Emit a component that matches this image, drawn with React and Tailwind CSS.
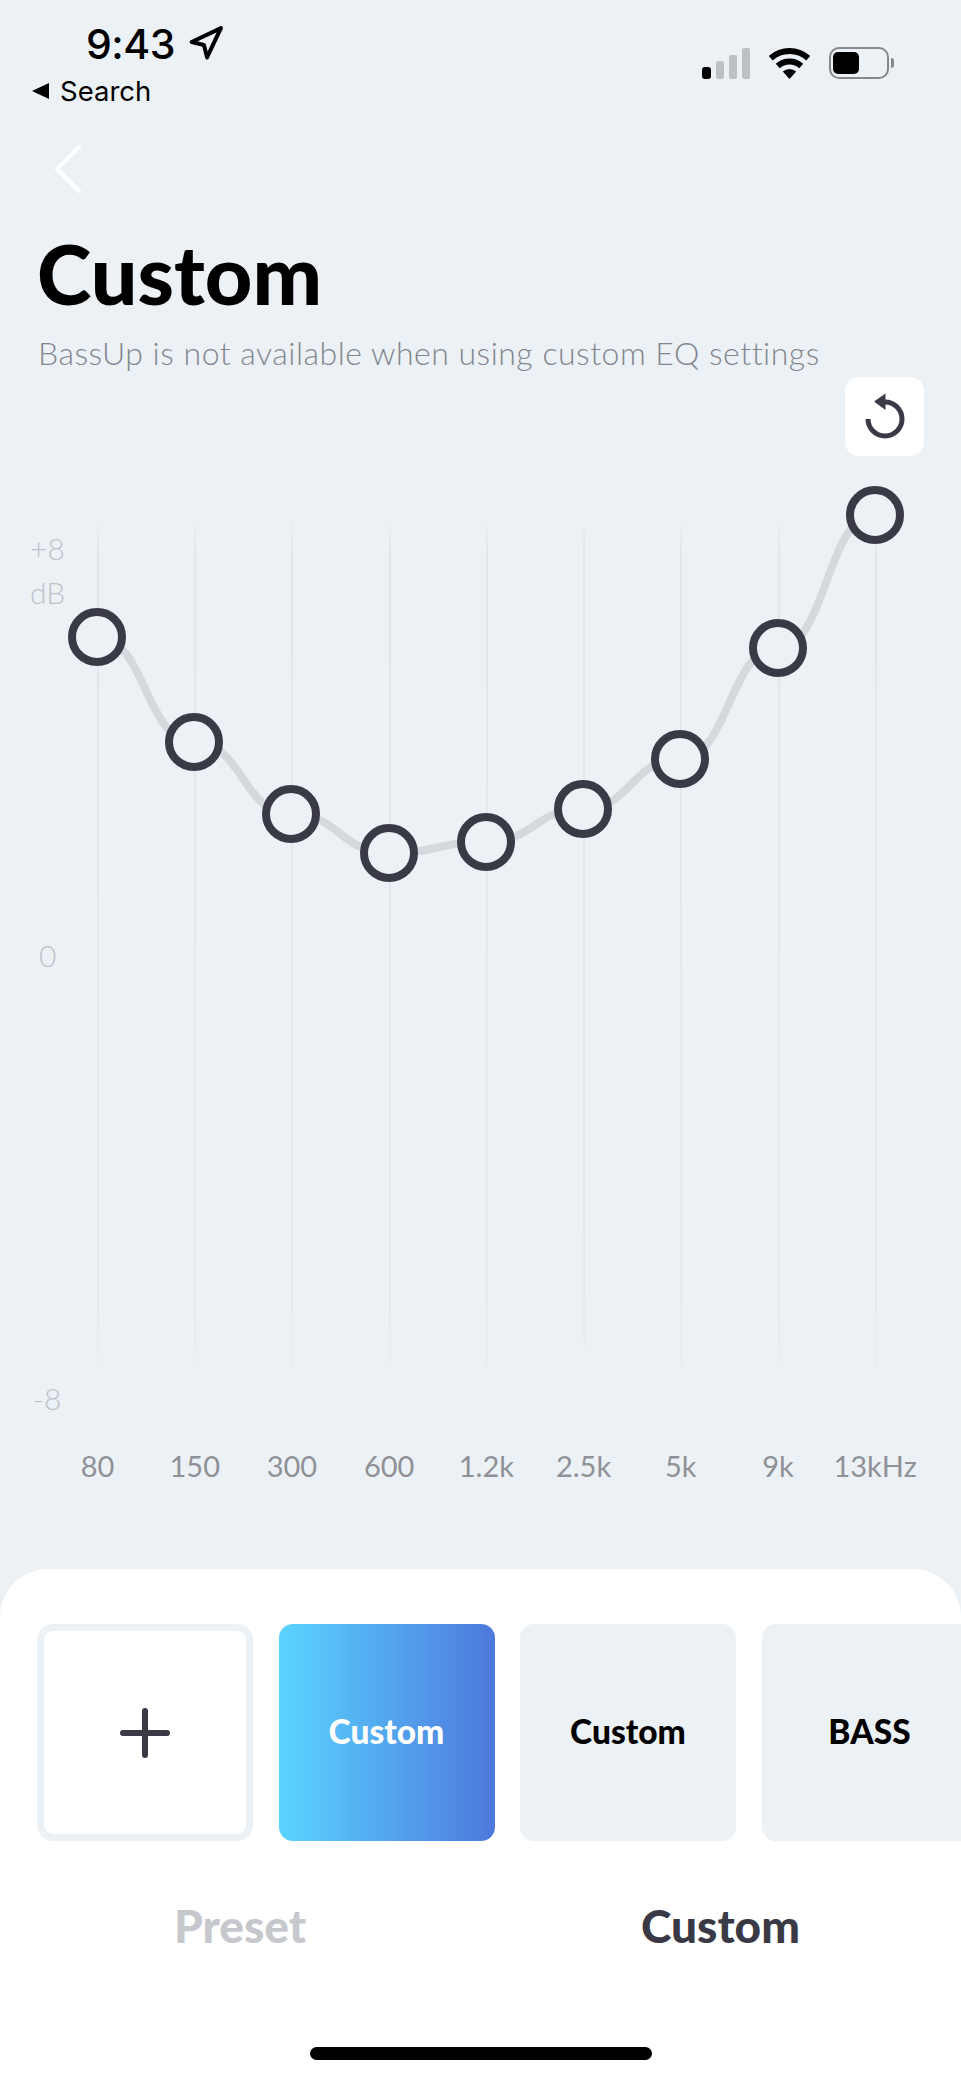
import React from 'react'
import { Navigation } from 'lucide-react'

const CENTERS = [97, 194, 291, 389, 486, 583, 680, 778, 875]
const LEVELS = [636, 741, 813, 852, 841, 808, 758, 647, 514]
const FREQS = ['80', '150', '300', '600', '1.2k', '2.5k', '5k', '9k', '13kHz']

// chart svg starts at y = 480 on the page
const CHART_TOP = 480
const points = CENTERS.map((x, i) => [x, LEVELS[i] - CHART_TOP])

function curvePath() {
  let d = `M${points[0][0]} ${points[0][1]}`
  for (let i = 1; i < points.length; i++) {
    const [x0, y0] = points[i - 1]
    const [x1, y1] = points[i]
    const mid = (x1 - x0) / 2
    d += ` C${x0 + mid} ${y0} ${x1 - mid} ${y1} ${x1} ${y1}`
  }
  return d
}

function StatusBar() {
  return (
    <div className="flex h-[120px] justify-between font-['Inter',sans-serif] text-black">
      <div className="flex flex-col pl-8 pt-[21px]">
        <div className="flex h-[46px] items-center pl-[54px]">
          <span className="text-[41px] font-medium leading-[46px] tracking-[-0.5px]">9:43</span>
          <Navigation size={37} strokeWidth={2.6} className="ml-[12px] mt-[-2px]" />
        </div>
        <div className="mt-[6px] flex h-[36px] items-center">
          <svg width="17" height="16" viewBox="0 0 17 16"><polygon points="0,8 17,0 17,16" fill="#000" /></svg>
          <span className="ml-[11px] text-[27.5px] leading-[36px]">Search</span>
        </div>
      </div>
      <div className="flex items-end pb-[41px] pr-[67px]">
        <div className="flex items-end gap-[5px]">
          <div className="h-[12px] w-[9px] rounded-[3px] bg-black" />
          <div className="h-[18px] w-[8px] rounded-[2px] bg-[#bdc1c6]" />
          <div className="h-[24px] w-[8px] rounded-[2px] bg-[#bdc1c6]" />
          <div className="h-[31px] w-[8px] rounded-[2px] bg-[#bdc1c6]" />
        </div>
        <svg className="ml-[19px]" width="41" height="31" viewBox="0 0 41 31" fill="none">
          <path d="M1.8 10.2A28 28 0 0 1 39.2 10.2" stroke="#000" strokeWidth="6" />
          <path d="M8.8 18A17.5 17.5 0 0 1 32.2 18" stroke="#000" strokeWidth="6" />
          <path d="M13.8 23.6A10 10 0 0 1 27.2 23.6L20.5 31Z" fill="#000" />
        </svg>
        <div className="ml-[19px] flex items-center">
          <div className="flex h-[32px] w-[60px] items-center rounded-[10px] border-[2.5px] border-[#85888d] pl-[2px]">
            <div className="h-[22px] w-[26px] rounded-[5px] bg-black" />
          </div>
          <div className="ml-[2px] h-[10px] w-[3px] rounded-r-full bg-[#85888d]" />
        </div>
      </div>
    </div>
  )
}

function ResetIcon() {
  return (
    <svg width="44" height="50" viewBox="0 0 44 50" fill="none">
      <path d="M22 10A17 17 0 1 1 5 27" stroke="#393a45" strokeWidth="5" />
      <polygon points="11,9.5 22.5,1.5 22.5,18" fill="#393a45" />
    </svg>
  )
}

function Chart() {
  return (
    <svg width="961" height="930" viewBox="0 0 961 930" fill="none" className="block">
      <defs>
        <linearGradient id="gridFade" gradientUnits="userSpaceOnUse" x1="0" y1="36" x2="0" y2="912">
          <stop offset="0" stopColor="#e2e6ea" stopOpacity="0" />
          <stop offset="0.04" stopColor="#e2e6ea" />
          <stop offset="0.9" stopColor="#e6eaee" />
          <stop offset="1" stopColor="#e6eaee" stopOpacity="0" />
        </linearGradient>
      </defs>
      {CENTERS.map(x => (
        <rect key={x} x={x} y="36" width="2" height="876" fill="url(#gridFade)" />
      ))}
      <path d={curvePath()} stroke="#d5d9dd" strokeWidth="8" strokeLinecap="round" />
      {points.map(([x, y]) => (
        <circle key={x} cx={x} cy={y} r="25" fill="#ecf1f6" stroke="#393a45" strokeWidth="8" />
      ))}
    </svg>
  )
}

export default function App() {
  return (
    <div className="flex h-[2080px] w-[961px] flex-col overflow-hidden bg-[#ecf1f6] font-['Lato',sans-serif]">
      <StatusBar />

      <div className="pl-[52px] pt-[24px]">
        <svg width="30" height="50" viewBox="0 0 30 50" fill="none" className="block">
          <polyline points="27,3 5,25 27,47" stroke="#fff" strokeWidth="4" strokeLinecap="round" strokeLinejoin="round" />
        </svg>
      </div>

      <h1 className="ml-[37px] mt-[32px] text-[82.5px] font-black leading-[96px] text-black">Custom</h1>
      <p className="ml-[38px] mt-[11px] text-[32px] font-light leading-[40px] tracking-[0.5px] text-[#82868e]">
        BassUp is not available when using custom EQ settings
      </p>

      {/* chart area */}
      <div className="relative mt-[108px] h-[1010px] shrink-0">
        <Chart />

        <div className="absolute left-[845px] top-[-104px] flex h-[79px] w-[79px] items-center justify-center rounded-[14px] bg-white">
          <ResetIcon />
        </div>

        <div className="absolute left-[30px] top-[45px] text-[30px] font-light leading-[44px] text-[#bfc2c8]">
          +8<br />dB
        </div>
        <div className="absolute left-[39px] top-[452px] text-[30px] font-light leading-[44px] text-[#bfc2c8]">0</div>
        <div className="absolute left-[33px] top-[895px] text-[30px] font-light leading-[44px] text-[#bfc2c8]">-8</div>

        <div className="absolute left-[49px] top-[965px] flex">
          {FREQS.map(f => (
            <div key={f} className="w-[97.2px] text-center text-[29px] font-normal leading-[40px] text-[#8f9196]">{f}</div>
          ))}
        </div>
      </div>

      {/* bottom sheet */}
      <div className="mt-auto flex h-[511px] w-full shrink-0 flex-col rounded-t-[48px] bg-white">
        <div className="mt-[55px] flex gap-[25.5px] overflow-hidden pl-[37px]">
          <div className="flex h-[217px] w-[216px] shrink-0 items-center justify-center rounded-[16px] border-[7px] border-[#ecf1f5]">
            <svg width="50" height="50" viewBox="0 0 50 50" fill="none">
              <path d="M25 3V47M3 25H47" stroke="#393a45" strokeWidth="6" strokeLinecap="round" />
            </svg>
          </div>
          <div className="flex h-[217px] w-[216px] shrink-0 items-center justify-center rounded-[14px] bg-gradient-to-r from-[#5ad4ff] to-[#4d78dc] pb-[3px] text-[33.5px] font-black text-white">
            Custom
          </div>
          <div className="flex h-[217px] w-[216px] shrink-0 items-center justify-center rounded-[14px] bg-[#ecf1f5] pb-[3px] text-[33.5px] font-black text-black">
            Custom
          </div>
          <div className="flex h-[217px] w-[216px] shrink-0 items-center justify-center rounded-[14px] bg-[#ecf1f5] pb-[3px] text-[33.5px] font-black text-black">
            BASS
          </div>
        </div>

        <div className="mt-[57px] flex">
          <div className="w-[480px] text-center text-[46px] font-black leading-[56px] text-[#c6c8cd]">Preset</div>
          <div className="w-[481px] text-center text-[46px] font-black leading-[56px] text-[#393a45]">Custom</div>
        </div>

        <div className="mx-auto mt-[93px] h-[13px] w-[342px] rounded-full bg-black" />
      </div>
    </div>
  )
}
